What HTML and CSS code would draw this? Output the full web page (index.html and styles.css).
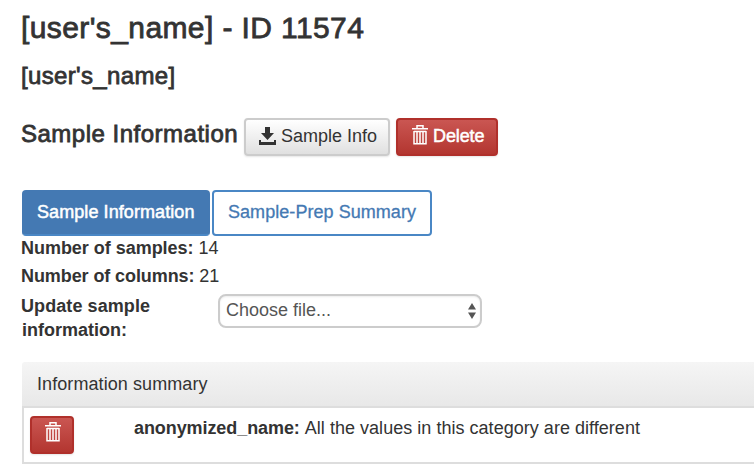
FILE: index.html
```html
<!DOCTYPE html>
<html lang="en">
<head>
<meta charset="utf-8">
<title>Sample Information</title>
<link rel="stylesheet" href="styles.css">
</head>
<body>
<svg class="defs" width="0" height="0" aria-hidden="true">
  <symbol id="trash" viewBox="0 0 16 20">
    <path d="M5 3.2V.8H11V3.2M0 3.8H16M2 6V18.8H14V6M2 6.6H14M5 7V18M8 7V18M11 7V18" fill="none" stroke="currentColor" stroke-width="1.5"/>
  </symbol>
</svg>
<main class="page">
  <h1 class="title"><span>[user's_name] - ID 11574</span></h1>
  <h2 class="owner"><span>[user's_name]</span></h2>
  <div class="heading-row">
    <h2 class="heading"><span>Sample Information</span></h2>
    <button class="btn btn-default">
      <svg class="icon-download" viewBox="0 0 17 18"><path d="M6 0H11V6H15L8.5 13L2 6H6ZM0 13H2V15H15V13H17V18H0Z" fill="currentColor"/></svg>
      <span class="btn-info-text">Sample Info</span>
    </button>
    <button class="btn btn-danger">
      <svg class="icon-trash"><use href="#trash"/></svg>
      <span class="btn-delete-text">Delete</span>
    </button>
  </div>
  <nav class="tabs">
    <a class="tab tab-active"><span class="tab-info-text">Sample Information</span></a>
    <a class="tab tab-outline"><span class="tab-prep-text">Sample-Prep Summary</span></a>
  </nav>
  <p class="fact"><b class="label-samples">Number of samples:</b> <span>14</span></p>
  <p class="fact fact-columns"><b class="label-columns">Number of columns:</b> <span>21</span></p>
  <div class="update-row">
    <label class="update-label">Update sample<br>information:</label>
    <div class="select">
      <span class="select-text">Choose file...</span>
      <svg class="arrows" viewBox="0 0 8 16"><path d="M4 0L8 6.5H0ZM0 9.5H8L4 16Z" fill="#555"/></svg>
    </div>
  </div>
  <section class="panel">
    <header class="panel-heading"><span class="panel-title">Information summary</span></header>
    <div class="panel-row">
      <button class="btn btn-danger btn-remove"><svg class="icon-trash"><use href="#trash"/></svg></button>
      <p class="category"><b class="category-name">anonymized_name:</b> <span class="category-text">All the values in this category are different</span></p>
    </div>
  </section>
</main>
</body>
</html>
```
FILE: styles.css
```css
* { box-sizing: border-box; }
html, body { margin: 0; overflow: hidden; }
body {
  background: #fff;
  color: #333;
  font: 18px/24px "Liberation Sans", Arial, sans-serif;
  white-space: nowrap;
}
h1, h2, p { margin: 0; }
.defs { display: block; height: 0; }
.page { height: 464px; padding: 13px 0 0 22px; overflow: hidden; }
.title, .owner, .heading, .fact, .update-label { text-indent: -1px; }
.title, .owner, .heading { font-weight: 400; -webkit-text-stroke: 0.8px #333; }
.title { font-size: 30px; line-height: 30px; letter-spacing: 0.4px; }
.owner { margin-top: 21px; font-size: 24px; line-height: 24px; letter-spacing: 0.34px; }
.heading-row { display: flex; height: 38px; margin-top: 30px; }
.heading { width: 222px; font-size: 24px; line-height: 32px; letter-spacing: 0.5px; }
.btn {
  display: flex;
  align-items: center;
  height: 38px;
  margin: 0;
  padding: 0;
  border: 2px solid #ccc;
  border-radius: 4px;
  font: inherit;
  line-height: 32px;
  color: #333;
  box-shadow: 0 1px 2px rgba(0, 0, 0, .1);
}
.btn-default { width: 146px; margin-right: 6px; padding: 0 0 3px 13px; background: linear-gradient(#fff, #e0e0e0); }
.btn-danger {
  width: 102px;
  padding: 0 0 2px 14px;
  border-color: #b0302b;
  color: #fff;
  background: linear-gradient(#ca5652, #b33630);
}
.btn-delete-text { -webkit-text-stroke: 0.5px #fff; letter-spacing: -0.1px; }
.icon-download { width: 17px; height: 18px; margin-right: 5px; }
.icon-trash { width: 16px; height: 20px; margin: 0 5px 2px 0; }
.tabs { display: flex; gap: 2px; margin-top: 34px; }
.tab {
  height: 46px;
  padding-left: 13px;
  border: 2px solid #4a87c5;
  border-radius: 4px;
  line-height: 40px;
}
.tab-active { width: 188px; background: #4479b3; border-color: #4479b3; border-bottom-color: #4a87c5; color: #fff; }
.tab-info-text { -webkit-text-stroke: 0.5px #fff; letter-spacing: 0.08px; }
.tab-outline { width: 220px; padding-left: 14px; color: #4479b3; letter-spacing: 0.05px; -webkit-text-stroke: 0.3px #4479b3; }
.fact { letter-spacing: -0.03px; }
.fact-columns { margin-top: 4px; letter-spacing: -0.09px; }
.update-row { display: flex; height: 48px; margin-top: 5px; }
.update-label { width: 196px; padding-top: 1px; font-weight: 700; }
.update-label::first-line { letter-spacing: 0.08px; }
.select {
  display: flex;
  align-items: center;
  justify-content: space-between;
  width: 264px;
  height: 34px;
  margin-top: 1px;
  padding: 0 4px 0 6px;
  border: 2px solid #ccc;
  border-radius: 8px;
  color: #555;
  box-shadow: inset 0 1px 2px rgba(0, 0, 0, .08);
}
.select-text { margin-bottom: 2px; }
.arrows { width: 8px; height: 16px; margin-bottom: 1px; }
.panel { margin-top: 21px; border-radius: 4px 0 0; }
.panel-heading {
  height: 44px;
  padding-left: 15px;
  border-radius: 3px 0 0;
  line-height: 44px;
  letter-spacing: 0.08px;
  background: linear-gradient(#f5f5f5, #e8e8e8);
}
.panel-row { display: flex; height: 58px; padding: 8px 0 0 6px; border: solid #ddd; border-width: 2px 0 2px 2px; }
.btn-remove { width: 44px; margin-right: 60px; padding-left: 13px; }
.btn-remove .icon-trash { margin: 0 0 4px; }
.category-name { letter-spacing: -0.08px; }
.category-text { letter-spacing: 0.03px; }
```
